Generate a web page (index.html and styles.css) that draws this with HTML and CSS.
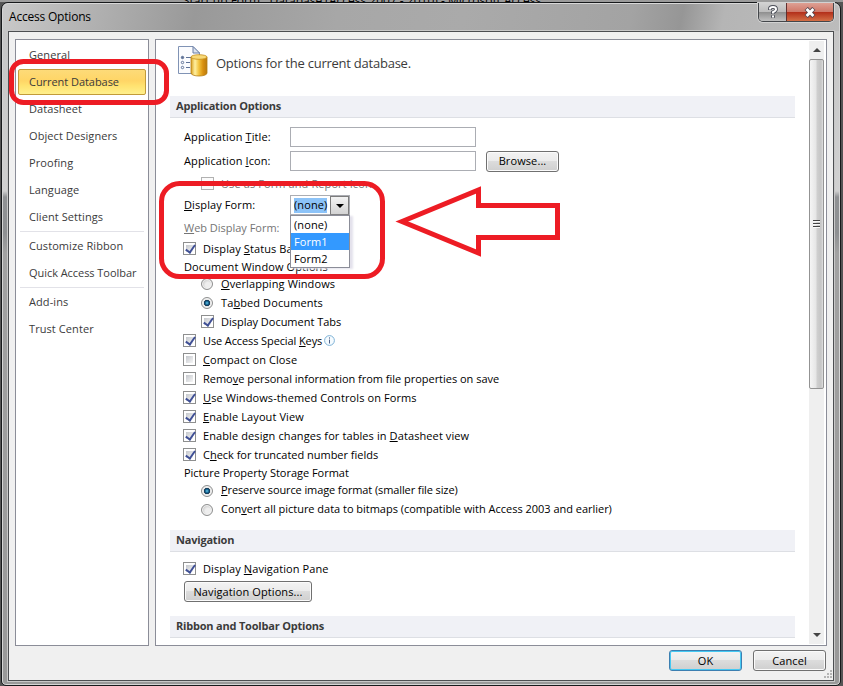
FILE: index.html
```html
<!DOCTYPE html>
<html lang="en">
<head>
    <meta charset="UTF-8">
    <meta name="viewport" content="width=device-width, initial-scale=1.0">
    <title>Access Options</title>
    <link rel="stylesheet" href="styles.css">
</head>
<body>
    <div class="backdrop">Start up Form : Database (Access 2007 - 2010) - Microsoft Access</div>
    <div class="window">
        <div class="titlebar">
            <span class="window-title">Access Options</span>
            <div class="window-buttons">
                <button class="win-btn help">
                    <svg width="12" height="14" viewBox="0 0 12 14"><path d="M3 5V3.8Q3 2 6 2T9 4.2Q9 5.8 6 7.2V9M6 10.2V12.8" fill="none" stroke="#4b4e58" stroke-width="3.8"/><path d="M3 4.6V3.8Q3 2 6 2T9 4.2Q9 5.8 6 7.2V8.6M6 10.4V12.4" fill="none" stroke="#fff" stroke-width="2"/></svg>
                </button>
                <button class="win-btn close">
                    <svg width="12" height="11" viewBox="0 0 12 11"><path d="M2.2 1.5L9.8 9.5M9.8 1.5L2.2 9.5" stroke="#55474f" stroke-width="4.6"/><path d="M2.6 2L9.4 9M9.4 2L2.6 9" stroke="#fff" stroke-width="2.8"/></svg>
                </button>
            </div>
        </div>
        <div class="client">
            <div class="panels">
                <div class="sidebar">
                    <div class="nav-item">General</div>
                    <div class="nav-item active">Current Database</div>
                    <div class="nav-item">Datasheet</div>
                    <div class="nav-item">Object Designers</div>
                    <div class="nav-item">Proofing</div>
                    <div class="nav-item">Language</div>
                    <div class="nav-item">Client Settings</div>
                    <div class="nav-line"></div>
                    <div class="nav-item">Customize Ribbon</div>
                    <div class="nav-item tight">Quick Access Toolbar</div>
                    <div class="nav-line"></div>
                    <div class="nav-item">Add-ins</div>
                    <div class="nav-item">Trust Center</div>
                </div>
                <div class="content">
                    <div class="page">
                        <div class="page-title">
                            <svg width="32" height="32" viewBox="0 0 32 32">
                                <defs>
                                    <linearGradient id="gold">
                                        <stop offset="0" stop-color="#d9a020"/>
                                        <stop offset=".25" stop-color="#fff0a0"/>
                                        <stop offset=".5" stop-color="#f2c23c"/>
                                        <stop offset=".75" stop-color="#d99010"/>
                                        <stop offset="1" stop-color="#b87a10"/>
                                    </linearGradient>
                                </defs>
                                <path d="M.5.5H15L21.500 7V27.500H.5Z" fill="#fbfcfe" stroke="#8093b5"/>
                                <path d="M15 .5V7H21.500Z" fill="#dbe3f0" stroke="#6b7fa5"/>
                                <g fill="#fff" stroke="#5f7398"><circle cx="4.500" cy="11.500" r="1.200" fill="#5f7398"/><circle cx="4.500" cy="16.500" r="1.200"/><circle cx="4.500" cy="21.500" r="1.200"/><path d="M8 11.500H13M8 16.500H12M8 21.500H12"/></g>
                                <path d="M13 11V27C13 31 29 31 29 27V11Z" fill="url(#gold)" stroke="#b57d14" stroke-width=".8"/>
                                <ellipse cx="21" cy="11" rx="8" ry="2.300" fill="#f8d977" stroke="#c48d1b" stroke-width=".8"/>
                            </svg>
                            <span>Options for the current database.</span>
                        </div>

                        <h2>Application Options</h2>
                        <div class="options">
                            <div class="row tall">
                                <label>Application <u>T</u>itle:</label>
                                <input type="text" class="field">
                            </div>
                            <div class="row tall">
                                <label>Application <u>I</u>con:</label>
                                <input type="text" class="field">
                                <button class="btn browse">Browse...</button>
                            </div>
                            <div class="row icon-row indent disabled"><i class="check"></i><span>Use as Form and Report Icon</span></div>
                            <div class="row tall">
                                <label><u>D</u>isplay Form:</label>
                                <div class="combo">
                                    <span class="combo-value">(none)</span>
                                    <span class="combo-arrow"></span>
                                    <div class="combo-list">
                                        <div>(none)</div>
                                        <div class="selected">Form1</div>
                                        <div>Form2</div>
                                    </div>
                                </div>
                            </div>
                            <div class="row web-row disabled tight"><label><u>W</u>eb Display Form:</label></div>
                            <div class="row"><i class="check on"></i><span>Display <u>S</u>tatus Bar</span></div>
                            <div class="row group">Document Window Options</div>
                            <div class="row first indent"><i class="radio"></i><span><u>O</u>verlapping Windows</span></div>
                            <div class="row indent"><i class="radio on"></i><span>Ta<u>b</u>bed Documents</span></div>
                            <div class="row indent tight"><i class="check on"></i><span>Display Document Tabs</span></div>
                            <div class="row tighter"><i class="check on"></i><span>Use Access Special <u>K</u>eys</span>
                                <svg class="info" width="11" height="11" viewBox="0 0 11 11"><circle cx="5.500" cy="5.500" r="4.900" fill="#f5fbff" stroke="#7fb2d6"/><path d="M5.500 2.400V3.600M5.500 4.600V8.500" stroke="#4a5f86"/></svg>
                            </div>
                            <div class="row"><i class="check"></i><span><u>C</u>ompact on Close</span></div>
                            <div class="row tight"><i class="check"></i><span>Remo<u>v</u>e personal information from file properties on save</span></div>
                            <div class="row"><i class="check on"></i><span><u>U</u>se Windows-themed Controls on Forms</span></div>
                            <div class="row"><i class="check on"></i><span><u>E</u>nable Layout View</span></div>
                            <div class="row"><i class="check on"></i><span>Enable design changes for tables in <u>D</u>atasheet view</span></div>
                            <div class="row tight"><i class="check on"></i><span>C<u>h</u>eck for truncated number fields</span></div>
                            <div class="row group tight">Picture Property Storage Format</div>
                            <div class="row indent tighter raised"><i class="radio on"></i><span><u>P</u>reserve source image format (smaller file size)</span></div>
                            <div class="row indent tight raised"><i class="radio"></i><span>Con<u>v</u>ert all picture data to bitmaps (compatible with Access 2003 and earlier)</span></div>
                        </div>

                        <h2>Navigation</h2>
                        <div class="options nav-options">
                            <div class="row"><i class="check on"></i><span>Display <u>N</u>avigation Pane</span></div>
                            <button class="btn nav-btn">Navigation Options...</button>
                        </div>

                        <h2>Ribbon and Toolbar Options</h2>
                    </div>
                    <div class="scrollbar">
                        <div class="arrow up"></div>
                        <div class="thumb"><i></i><i></i><i></i></div>
                        <div class="arrow down"></div>
                    </div>
                </div>
            </div>
            <div class="footer">
                <button class="btn ok">OK</button>
                <button class="btn">Cancel</button>
            </div>
            <svg class="grip" width="9" height="9" viewBox="0 0 9 9"><path d="M7 1h2M4 4h2M7 4h2M1 7h2M4 7h2M7 7h2" stroke="#b4b4b4" stroke-width="2"/></svg>
        </div>
    </div>

    <!-- red highlights over the dialog -->
    <svg class="marks" width="843" height="686" viewBox="0 0 843 686">
        <rect x="11.500" y="61.500" width="155" height="41" rx="12"/>
        <rect x="161.500" y="183.500" width="221" height="93" rx="18"/>
        <path d="M402 221.500L478.500 190V205.500H557.500V237.500H478.500V253Z"/>
    </svg>
</body>
</html>
```
FILE: styles.css
```css
:root {
    --text: #000;
    --muted: #3b3b3b;
    --line: #8b8d98;
    --red: #ed1c24;
}

* {
    margin: 0;
    padding: 0;
    box-sizing: border-box;
}

body {
    width: 843px;
    height: 686px;
    overflow: hidden;
    position: relative;
    background: #555;
    font-family: 'Open Sans', 'Noto Sans', sans-serif;
    font-size: 11px;
    color: var(--text);
}

button, input {
    font: inherit;
}

u {
    text-underline-offset: 1px;
    text-decoration-thickness: 1px;
}

.backdrop {
    height: 2px;
    padding-left: 183px;
    overflow: hidden;
    background: #9b9b9b;
    font-size: 12px;
    line-height: 1px;
    white-space: nowrap;
}

.window {
    width: 840px;
    height: 684px;
    margin-left: 1px;
    padding: 0 6px 5px;
    border: 1px solid #17191b;
    border-radius: 7px 7px 5px 5px;
    box-shadow: inset 0 0 0 1px #d5d5d5;
    background: linear-gradient(#c4c4c4 0, #d0d0d0 188px, #909294 194px, #8e9092 230px, #a2a2a2 250px, #999 100%);
}

.titlebar {
    display: flex;
    justify-content: space-between;
    height: 28px;
    margin: 0 -5px;
    border-top: 1px solid #d8d8d8;
    border-radius: 6px 6px 0 0;
    background: linear-gradient(100deg, #c9c9c9 0, #b7b7b7 8%, #999 23%, #a7a7a7 40%, #aaa 55%, #a3a3a3 75%, #969696 81%, #b5b5b5 86%, #bcbcbc 100%);
}

.window-title {
    padding-left: 6px;
    font-size: 12px;
    line-height: 26px;
    letter-spacing: -0.2px;
}

.window-buttons {
    display: flex;
    height: 19px;
    margin: -1px 5px 0 0;
    border: 1px solid #43464a;
    border-top: 0;
    border-radius: 0 0 5px 5px;
    box-shadow: 0 0 0 1px #d2d2d2;
    overflow: hidden;
}

.win-btn {
    display: flex;
    align-items: center;
    justify-content: center;
    width: 27px;
    border: 0;
    background: linear-gradient(#d2d2d2 0, #bdbdbd 48%, #8e8e8e 50%, #c1c1c1 100%);
}

.win-btn.close {
    width: 47px;
    border-left: 1px solid #603030;
    background: linear-gradient(#dda094 0, #cf7869 48%, #b22d19 50%, #d36f46 100%);
}

.client {
    position: relative;
    width: 826px;
    height: 650px;
    padding: 7px 6px 0;
    border: 1px solid #4c4e51;
    box-shadow: 0 0 0 1px #c8c8c8;
    background: #f0f0f0;
}

.panels {
    display: flex;
    gap: 6px;
    height: 607px;
}

.sidebar {
    width: 134px;
    padding: 2px;
    border: 1px solid var(--line);
    background: #fff;
    color: var(--muted);
}

.nav-item {
    height: 27px;
    padding-left: 11px;
    line-height: 26px;
    white-space: nowrap;
    letter-spacing: 0.08px;
}

.nav-item.active {
    height: 26px;
    margin-bottom: 1px;
    padding-left: 10px;
    border: 1px solid #c29b3a;
    border-radius: 2px;
    background: linear-gradient(#fddb79 0, #ffd566 45%, #ffe270 65%, #fff08c 100%);
    line-height: 24px;
    letter-spacing: -0.05px;
}

.nav-item.tight {
    letter-spacing: -0.05px;
}

.nav-line {
    height: 1px;
    margin: 0 2px 1px;
    border-bottom: 1px solid #e2e2e8;
}

.content {
    display: flex;
    width: 672px;
    padding: 1px 2px 1px 14px;
    border: 1px solid var(--line);
    background: #fff;
}

.page {
    flex: none;
    width: 625px;
    margin-right: 14px;
    overflow: hidden;
}

.page-title {
    display: flex;
    height: 55px;
    padding: 5px 0 0 8px;
    gap: 6px;
    font-size: 13px;
    letter-spacing: -0.24px;
    color: var(--muted);
}

.page-title span {
    line-height: 34px;
}

h2 {
    height: 22px;
    padding-left: 6px;
    border-bottom: 1px solid #dddfe4;
    background: #f0f1f6;
    color: var(--muted);
    font-size: 11px;
    line-height: 20px;
    letter-spacing: -0.2px;
}

.options {
    height: 412px;
    padding: 7px 0 0 14px;
}

.row {
    display: flex;
    align-items: center;
    height: 19px;
    white-space: nowrap;
    letter-spacing: 0.1px;
}

.row.tight {
    letter-spacing: -0.02px;
}

.row.tighter {
    letter-spacing: -0.11px;
}

.row.tall {
    height: 24px;
}

.row.icon-row {
    height: 20px;
}

.row.web-row {
    height: 22px;
}

.row.group {
    height: 17px;
}

.row.first {
    height: 18px;
}

.row.indent {
    padding-left: 18px;
}

.row.disabled {
    color: #757575;
}

.row label {
    width: 106px;
    padding-bottom: 2px;
}

.row.first span,
.row.raised span {
    padding-bottom: 2px;
}

.field {
    width: 186px;
    height: 20px;
    border: 1px solid #abadb3;
}

.check {
    flex: none;
    width: 13px;
    height: 13px;
    margin: 0 7px 0 -1px;
    padding: 2px;
    border: 1px solid #8e8f8f;
    background: linear-gradient(135deg, #c4c7cc, #f6f6f6) content-box;
}

.disabled .check {
    border-color: #b1b1b1;
    background: #fbfbfb;
}

.check.on::after {
    content: '';
    display: block;
    width: 4px;
    height: 8px;
    margin: -1px 0 0 2px;
    border: solid #3f4f95;
    border-width: 0 2px 2px 0;
    transform: translate(-0.5px, -1px) rotate(35deg);
}

.radio {
    flex: none;
    width: 12px;
    height: 12px;
    margin: 0 8px 0 -1px;
    border: 1px solid #8e8f8f;
    border-radius: 50%;
    background: radial-gradient(circle at 60% 60%, #eee 30%, #ccc 70%);
    box-shadow: inset 0 0 0 1px #f4f4f4;
}

.radio.on {
    background: radial-gradient(circle at 50% 50%, #67c8ec 0, #14618d 25%, #12334f 40%, #e5e5e5 50%);
}

.info {
    margin-left: 2px;
}

.btn {
    width: 73px;
    height: 21px;
    border: 1px solid #707070;
    border-radius: 3px;
    box-shadow: inset 0 0 0 1px #fbfbfb;
    background: linear-gradient(#f3f3f3 0, #ebebeb 48%, #dcdcdc 50%, #cfcfcf 100%);
    line-height: 18px;
    letter-spacing: 0.1px;
}

.browse {
    margin-left: 10px;
}

.combo {
    position: relative;
    display: flex;
    width: 60px;
    height: 20px;
    padding: 2px 0 1px 3px;
    border: 1px solid #abadb3;
}

.combo-value {
    width: 34px;
    height: 15px;
    background: #8cc3f8;
    line-height: 14px;
}

.combo-arrow {
    display: flex;
    align-items: center;
    justify-content: center;
    width: 19px;
    height: 19px;
    margin: -2px 0 0 3px;
    border: 1px solid #7c7c7c;
    background: linear-gradient(#f3f3f3, #d3d3d3);
}

.combo-arrow::after {
    content: '';
    border: solid transparent;
    border-width: 4px 4px 0;
    border-top-color: #000;
}

.combo-list {
    position: absolute;
    top: 19px;
    left: -1px;
    width: 60px;
    border: 1px solid #8b8d98;
    background: #fff;
    box-shadow: 3px 1px 2px #e4e2ec;
    line-height: 17px;
}

.combo-list div {
    height: 17px;
    padding-left: 3px;
}

.combo-list .selected {
    background: #3399ff;
    color: #fff;
}

.nav-options {
    height: 64px;
    padding-top: 7px;
}

.nav-btn {
    display: block;
    width: 128px;
    margin-top: 3px;
}

.scrollbar {
    display: flex;
    flex: none;
    flex-direction: column;
    width: 15px;
    background: #efefef;
}

.arrow {
    display: flex;
    align-items: center;
    justify-content: center;
    height: 18px;
}

.arrow::after {
    content: '';
    border: solid transparent;
}

.arrow.up::after {
    border-width: 0 4px 4px;
    border-bottom-color: #444;
}

.arrow.down {
    margin-top: auto;
}

.arrow.down::after {
    border-width: 4px 4px 0;
    border-top-color: #444;
}

.thumb {
    display: flex;
    flex-direction: column;
    align-items: center;
    justify-content: center;
    gap: 1px;
    width: 15px;
    height: 330px;
    border: 1px solid #939393;
    border-radius: 2px;
    background: linear-gradient(90deg, #f5f5f5 0, #e6e6e6 45%, #cfcfcf 55%, #c5c5c5 85%, #e0e0e0 100%);
}

.thumb i {
    width: 7px;
    height: 2px;
    border-top: 1px solid #444;
    background: #fafafa;
}

.footer {
    display: flex;
    justify-content: flex-end;
    gap: 11px;
    padding: 4px 1px 0 0;
}

.btn.ok {
    border-color: #3c7fb1;
    box-shadow: inset 0 0 0 1px #45c9f3;
}

.grip {
    position: absolute;
    right: 1px;
    bottom: 1px;
}

.marks {
    position: absolute;
    top: 0;
    left: 0;
    fill: none;
    stroke: var(--red);
    stroke-width: 5;
}
```
